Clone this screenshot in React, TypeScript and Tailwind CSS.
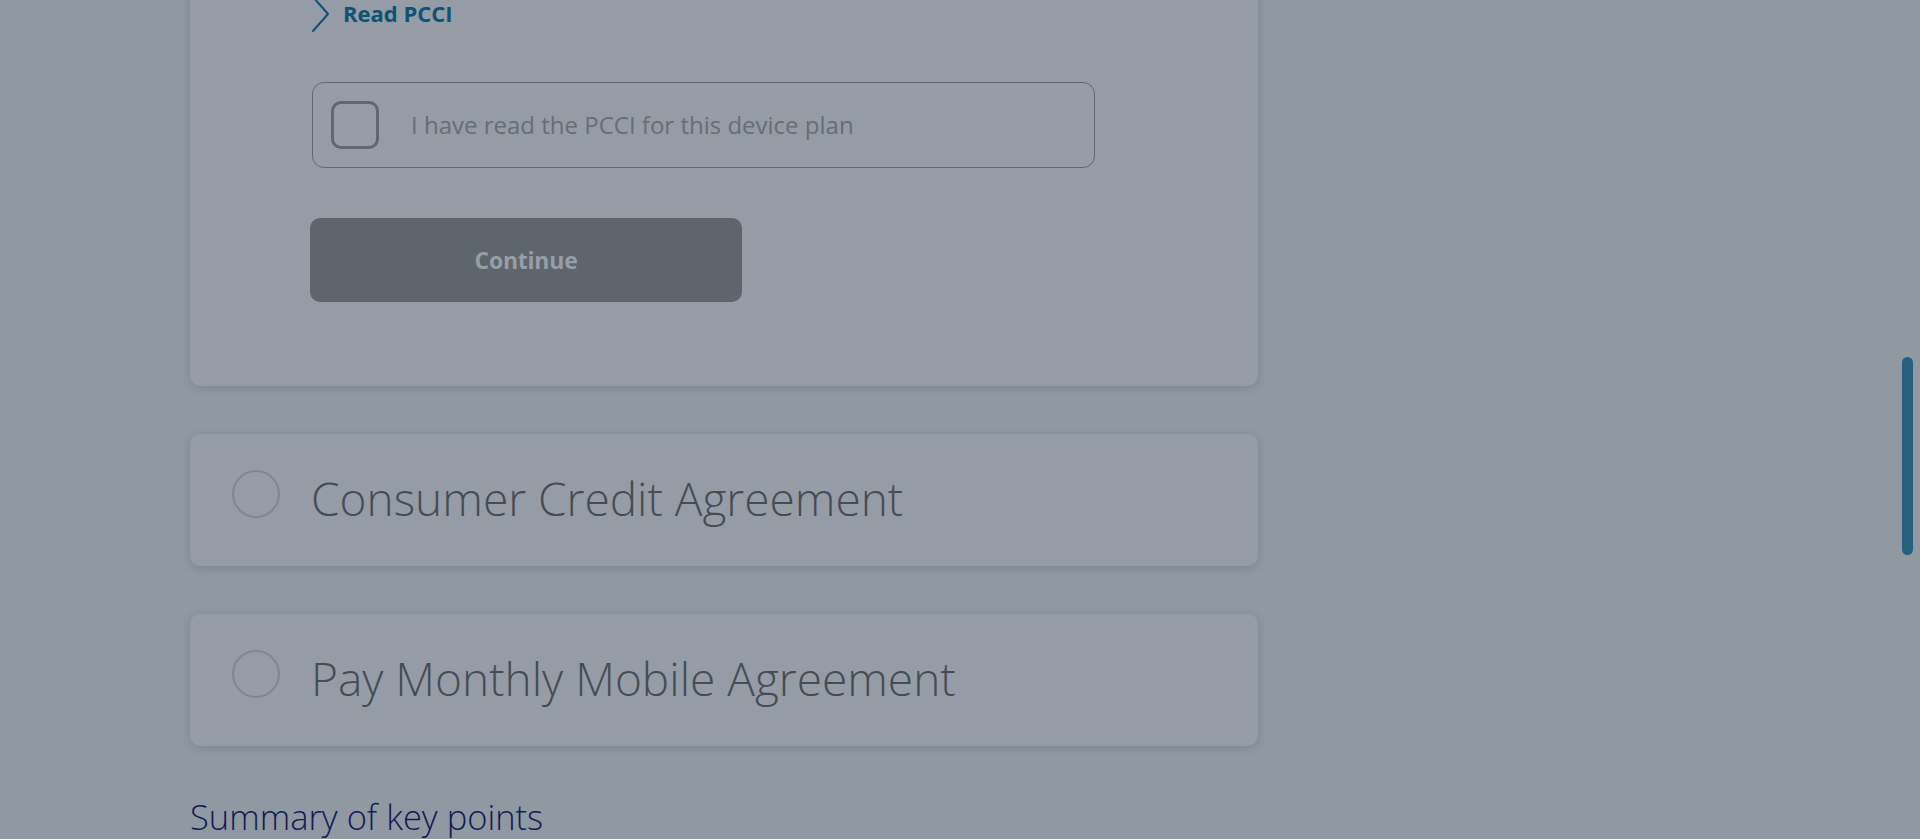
import React from "react";

const font = { fontFamily: '"Open Sans", "Noto Sans", Arial, sans-serif' };

function AgreementCard({ title }: { title: string }) {
  return (
    <div className="flex h-[132px] w-[1068px] items-start rounded-[10px] bg-[#959ca5] pl-[42px] pt-[36px] shadow-[0_2px_8px_rgba(40,45,55,0.18)]">
      <div className="h-[48px] w-[48px] shrink-0 rounded-full border-[2.5px] border-[#80878f]" />
      <div className="ml-[31px] mt-[-2px] text-[46px] font-light leading-[60px] text-[#464c53]">
        {title}
      </div>
    </div>
  );
}

export default function App() {
  return (
    <div style={font} className="relative h-[839px] w-full overflow-hidden bg-[#9098a1]">
      <div className="mt-[-13px] flex flex-col pl-[190px]">
        {/* PCCI card */}
        <div className="flex w-[1068px] flex-col rounded-b-[10px] bg-[#959ca5] pb-[84px] pl-[120px] shadow-[0_2px_8px_rgba(40,45,55,0.18)]">
          <div className="flex h-[52px] items-center">
            <svg width="20" height="36" viewBox="0 0 20 36" className="ml-[1px] mt-[2px]">
              <path d="M2 1 L17 18 L2 35" fill="none" stroke="#0c5377" strokeWidth="2" strokeLinecap="round" strokeLinejoin="round" />
            </svg>
            <span className="ml-[12px] text-[22px] font-bold leading-[24px] text-[#0c5377]">Read PCCI</span>
          </div>
          <div className="ml-[2px] mt-[43px] flex h-[86px] w-[783px] items-center rounded-[12px] border-[1.5px] border-[#60676f] pl-[18px]">
            <div className="h-[48px] w-[48px] shrink-0 rounded-[10px] border-[3px] border-[#60676f]" />
            <span className="ml-[32px] text-[24px] text-[#686e75]">
              I have read the PCCI for this device plan
            </span>
          </div>
          <button className="mt-[50px] flex h-[84px] w-[432px] items-center justify-center rounded-[10px] bg-[#5e656d] text-[23px] font-bold tracking-[-0.01em] text-[#979ea6]">
            Continue
          </button>
        </div>

        <div className="mt-[48px]">
          <AgreementCard title="Consumer Credit Agreement" />
        </div>
        <div className="mt-[48px]">
          <AgreementCard title="Pay Monthly Mobile Agreement" />
        </div>

        <h2 className="mt-[49px] text-[34.5px] font-light leading-[44px] text-[#141a58]">
          Summary of key points
        </h2>
      </div>

      {/* scrollbar thumb */}
      <div className="absolute left-[1902px] top-[357px] h-[198px] w-[11px] rounded-full bg-[#255f7e]" />
    </div>
  );
}
